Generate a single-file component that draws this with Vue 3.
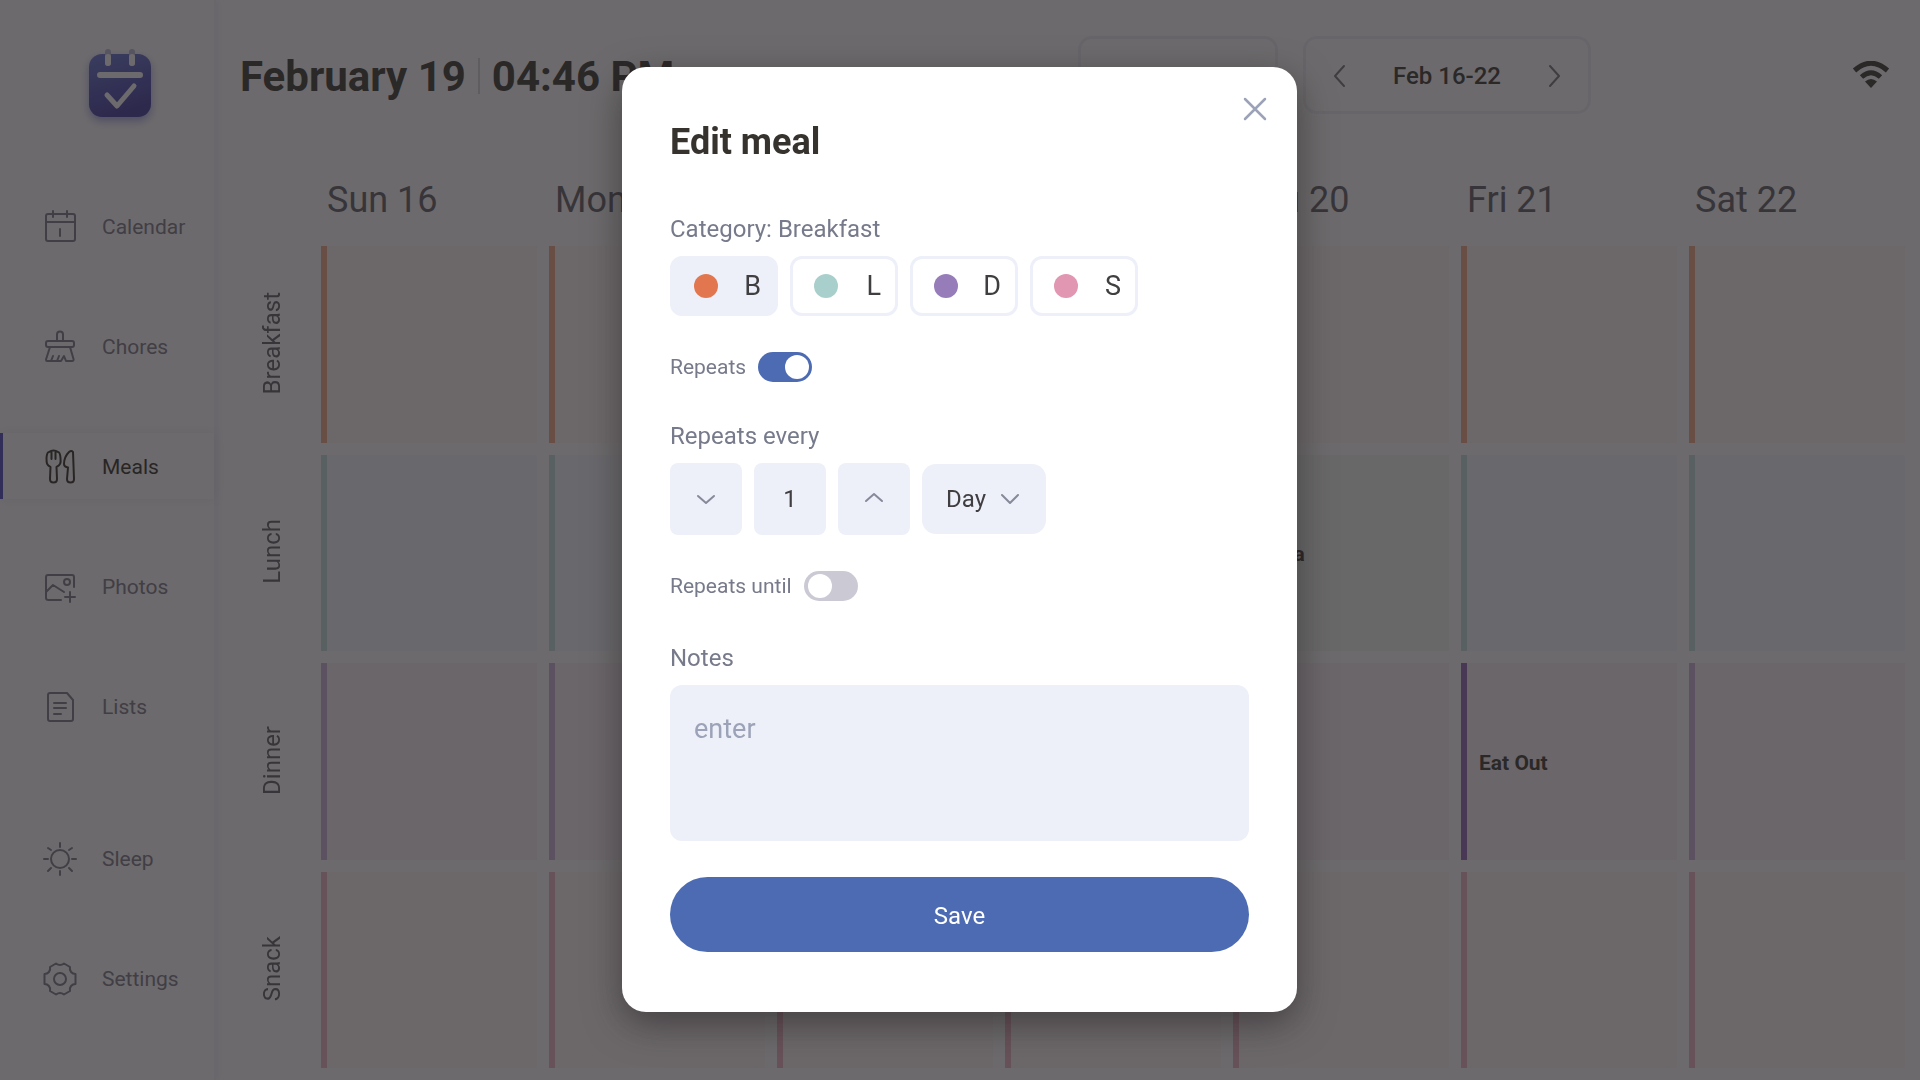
<script setup>
import { ref, computed } from 'vue';

// sidebar navigation
const navItems = [
  { key: 'calendar', label: 'Calendar' },
  { key: 'chores', label: 'Chores' },
  { key: 'meals', label: 'Meals' },
  { key: 'photos', label: 'Photos' },
  { key: 'lists', label: 'Lists' },
  { key: 'sleep', label: 'Sleep' },
  { key: 'settings', label: 'Settings' }
];
var activeNav = ref('meals');

const days = ['Sun 16', 'Mon 17', 'Tue 18', 'Wed 19', 'Thu 20', 'Fri 21', 'Sat 22'];

const categories = [
  { name: 'Breakfast', short: 'B' },
  { name: 'Lunch', short: 'L' },
  { name: 'Dinner', short: 'D' },
  { name: 'Snack', short: 'S' }
];

// planned meals, keyed by category and day
const meals = {
  'Lunch|Thu 20': 'Pasta',
  'Dinner|Fri 21': 'Eat Out'
};

function mealFor(category, day) {
  return meals[category + '|' + day];
}

// edit form
var showModal = ref(true);
var selected = ref('B');
var repeats = ref(true);
var every = ref(1);
var unit = ref('Day');
var hasEnd = ref(false);
var notes = ref('');

var selectedName = computed(() => categories.find(c => c.short === selected.value).name);

function stepDown() {
  if (every.value > 1) every.value--;
}

function save() {
  showModal.value = false;
}
</script>

<template>
  <div class="app">
    <!-- sidebar -->
    <aside class="sidebar">
      <svg class="logo" viewBox="0 0 80 80">
        <defs>
          <linearGradient id="logoFill" x1="0" y1="0" x2="0.3" y2="1">
            <stop offset="0" stop-color="#6474d6" />
            <stop offset="1" stop-color="#3c36a0" />
          </linearGradient>
        </defs>
        <rect class="logo-body" x="9" y="12" width="62" height="63" rx="13" fill="url(#logoFill)" />
        <path d="M28 10v11M52 10v11" stroke="#b9bbd8" stroke-width="6" stroke-linecap="round" />
        <path d="M28 15v6M52 15v6M20 33h40" stroke="#fff" stroke-width="6" stroke-linecap="round" />
        <path d="M27 53l10 11 17-20" fill="none" stroke="#fff" stroke-width="5" stroke-linecap="round" stroke-linejoin="round" />
      </svg>

      <nav class="nav">
        <a
          v-for="item in navItems"
          :key="item.key"
          href="#"
          class="nav-item"
          :class="['nav-' + item.key, { active: activeNav === item.key }]"
          @click.prevent="activeNav = item.key"
        >
          <svg class="nav-icon" viewBox="0 0 36 36">
            <g v-if="item.key === 'calendar'">
              <rect x="4" y="5" width="29" height="27" rx="2" />
              <path d="M4 13h29M11 2v6M25 2v6M18 20v7" />
            </g>
            <g v-else-if="item.key === 'chores'">
              <rect x="4" y="12" width="28" height="6" rx="2" />
              <path d="M15 12V5.500a3 3 0 0 1 6 0V12" />
              <path d="M8 18L4 30.500Q4 32 5 32H19L22 27l2 5h6Q32 32 31.500 30L28 18M9 32l2-5M15 32l2-5" />
            </g>
            <g v-else-if="item.key === 'meals'">
              <path d="M7 3q-2 0-2.500 6c0 5 0 7 4 9L8 30q0 3.500 3.500 3.500T15 30l-.5-12c4-2 4.500-4 4-9Q18 3 16 3q-2-1.500-4.500-1.500T7 3zM9.500 3.500V10M13.500 3.500V10" />
              <path d="M31 3q-1.500-2-4 0c-3 3-5 8-5 12 0 3 2 3 4 3.500L25 30q0 3.500 3.500 3.500T32 30z" />
            </g>
            <g v-else-if="item.key === 'photos'">
              <path d="M19 31H6.500Q4 31 4 29V8q0-2 2-2h24q2 0 2 2v10M4 23l7-7 11 7M28 23v10M23 28h10" />
              <circle cx="25" cy="13" r="3" />
            </g>
            <g v-else-if="item.key === 'lists'">
              <path d="M8 4h17l6 7v19q0 2-2 2H8q-2 0-2-2V6q0-2 2-2z" />
              <path d="M12 14h12M12 19h12M12 25h7" />
            </g>
            <g v-else-if="item.key === 'sleep'">
              <circle cx="18" cy="18" r="9" />
              <path d="M18 2v4M18 30v4M2 18h4M30 18h4M6 7l3 2M30 7l-3 2M6 30l3-3M30 30l-3-3" />
            </g>
            <g v-else>
              <circle cx="18" cy="18" r="6" />
              <path d="M14 2.500q4 3 8 0l6 3.500c-1 4 2 7 5.500 7v10c-3.500 0-6.500 3-5.500 7l-6 3.500q-4-3-8 0L8 30c1-4-2-7-5.500-7V13C6 13 9 10 8 6z" />
            </g>
          </svg>
          <span>{{ item.label }}</span>
        </a>
      </nav>
    </aside>

    <!-- weekly meal plan -->
    <main class="main">
      <header class="topbar">
        <h1 class="now">
          <span>February 19</span>
          <span class="now-divider"></span>
          <span>04:46 PM</span>
        </h1>
        <div class="controls">
          <button class="filter" type="button">
            <span>This week</span>
            <svg viewBox="0 0 24 24" width="24" height="24"><path d="M4 8l8 8 8-8" /></svg>
          </button>
          <div class="week">
            <button class="week-btn" type="button" aria-label="Previous week">
              <svg viewBox="0 0 24 24" width="24" height="24"><path d="M16 2L7 12l9 10" /></svg>
            </button>
            <span>Feb 16-22</span>
            <button class="week-btn" type="button" aria-label="Next week">
              <svg viewBox="0 0 24 24" width="24" height="24"><path d="M8 2l9 10-9 10" /></svg>
            </button>
          </div>
        </div>
        <svg class="wifi" viewBox="0 0 38 28">
          <path d="M2.500 9.500Q19-5 35.500 9.500M9.500 16Q19 7.500 28.500 16" fill="none" stroke-width="5" />
          <path d="M13 20.500q6-5 12 0L19 27z" stroke="none" />
        </svg>
      </header>

      <div class="days">
        <div v-for="day in days" :key="day" class="day">{{ day }}</div>
      </div>

      <div class="plan">
        <template v-for="cat in categories" :key="cat.name">
          <div class="row-label"><span>{{ cat.name }}</span></div>
          <div
            v-for="day in days"
            :key="day"
            class="cell"
            :class="['cell-' + cat.short, { filled: mealFor(cat.name, day) }]"
          >
            {{ mealFor(cat.name, day) }}
          </div>
        </template>
      </div>
    </main>

    <!-- edit dialog -->
    <div v-if="showModal" class="overlay">
      <form class="modal" role="dialog" aria-labelledby="modal-title" @submit.prevent="save">
        <button class="close" type="button" aria-label="Close" @click="showModal = false">
          <svg viewBox="0 0 24 24" width="24" height="24"><path d="M2 2l20 20M22 2L2 22" /></svg>
        </button>
        <h2 id="modal-title">Edit meal</h2>

        <div class="field-label">Category: {{ selectedName }}</div>
        <div class="chips">
          <button
            v-for="cat in categories"
            :key="cat.short"
            type="button"
            class="chip"
            :class="{ selected: selected === cat.short }"
            @click="selected = cat.short"
          >
            <span class="dot" :class="'dot-' + cat.short"></span>
            <span>{{ cat.short }}</span>
          </button>
        </div>

        <label class="switch">
          <span>Repeats</span>
          <input v-model="repeats" type="checkbox" />
        </label>

        <label class="field-label" for="every">Repeats every</label>
        <div class="stepper">
          <button class="step" type="button" aria-label="Less" @click="stepDown">
            <svg viewBox="0 0 24 24" width="24" height="24"><path d="M4 9l8 7 8-7" /></svg>
          </button>
          <input id="every" v-model="every" class="step" type="text" />
          <button class="step" type="button" aria-label="More" @click="every++">
            <svg viewBox="0 0 24 24" width="24" height="24"><path d="M4 14l8-7 8 7" /></svg>
          </button>
          <div class="unit">
            <select v-model="unit" aria-label="Unit">
              <option>Day</option>
              <option>Week</option>
              <option>Month</option>
            </select>
            <svg viewBox="0 0 24 24" width="24" height="24"><path d="M4 8l8 8 8-8" /></svg>
          </div>
        </div>

        <label class="switch">
          <span>Repeats until</span>
          <input v-model="hasEnd" type="checkbox" />
        </label>

        <label class="field-label notes-label" for="notes">Notes</label>
        <textarea id="notes" v-model="notes" placeholder="enter"></textarea>

        <button class="save" type="submit">Save</button>
      </form>
    </div>
  </div>
</template>

<style>
body {
  background: #fff;
}
</style>

<style scoped>
* {
  box-sizing: border-box;
}

.app {
  display: flex;
  min-height: 100vh;
  font-family: Roboto, "Liberation Sans", sans-serif;
  color: #36322d;
}

button,
input,
select,
textarea {
  font: inherit;
  color: inherit;
  border: none;
  background: none;
  padding: 0;
  margin: 0;
}

button {
  cursor: pointer;
}

svg {
  display: block;
  flex: none;
}

/* sidebar */
.sidebar {
  width: 216px;
  flex: none;
  border-right: 2px solid #f6f5fb;
  box-shadow: 3px 0 6px rgba(90, 90, 220, 0.08);
}

.logo {
  width: 80px;
  height: 80px;
  margin: 42px auto 0 80px;
  overflow: visible;
}

.logo-body {
  filter: drop-shadow(0 4px 4px rgba(69, 72, 200, 0.5));
}

.nav {
  display: flex;
  flex-direction: column;
  gap: 54px;
  margin-top: 71px;
}

.nav-item {
  display: flex;
  align-items: center;
  gap: 24px;
  height: 66px;
  padding: 2px 0 0 39px;
  border-left: 3px solid transparent;
  font-size: 21px;
  color: #7a7687;
  text-decoration: none;
}

.nav-item.active {
  color: #2f2b22;
  border-left-color: #4a4ac4;
  box-shadow: 0 0 12px rgba(80, 80, 160, 0.12);
}

.nav-sleep {
  margin-top: 32px;
}

.nav-icon {
  width: 36px;
  height: 36px;
  fill: none;
  stroke: currentColor;
  stroke-width: 2;
  stroke-linecap: round;
  stroke-linejoin: round;
}

/* top bar */
.main {
  flex: 1;
  min-width: 0;
  display: flex;
  flex-direction: column;
  padding: 36px 15px 12px 24px;
}

.topbar {
  display: flex;
  align-items: center;
  height: 78px;
  padding-right: 15px;
}

.now {
  display: flex;
  align-items: center;
  gap: 12px;
  width: 838px;
  margin: 0;
  padding-top: 2px;
  font-size: 42px;
  font-weight: 700;
  white-space: nowrap;
}

.now-divider {
  width: 2px;
  height: 36px;
  background: #d8d6da;
}

.controls {
  display: flex;
  gap: 25px;
}

.filter,
.week {
  display: flex;
  align-items: center;
  justify-content: space-between;
  height: 78px;
  border: 3px solid #f0f0f8;
  border-radius: 14px;
  font-size: 24px;
  font-weight: 500;
}

.filter {
  width: 200px;
  padding: 3px 22px 0 12px;
}

.week {
  width: 288px;
  padding: 2px 22px 0;
}

.filter svg,
.week-btn svg {
  fill: none;
  stroke: #77737c;
  stroke-width: 2;
  stroke-linecap: round;
  stroke-linejoin: round;
}

.wifi {
  width: 38px;
  height: 28px;
  margin-left: auto;
  fill: #36322d;
  stroke: #36322d;
}

/* week grid */
.days {
  display: grid;
  grid-template-columns: repeat(7, 1fr);
  gap: 12px;
  margin-left: 81px;
  padding-top: 62px;
  height: 132px;
  font-size: 36px;
  line-height: 48px;
  color: #5c5a60;
}

.day {
  padding-left: 6px;
}

.plan {
  flex: 1;
  display: grid;
  grid-template-columns: 69px repeat(7, 1fr);
  grid-template-rows: repeat(4, 1fr);
  gap: 12px;
}

.row-label {
  display: flex;
  align-items: center;
  justify-content: center;
  padding: 0 6px 2px 0;
  font-size: 24px;
  color: #5c5a60;
}

.row-label span {
  writing-mode: vertical-rl;
  rotate: 180deg;
}

.cell {
  display: flex;
  align-items: center;
  padding: 3px 0 0 12px;
  border-left: 6px solid;
  font-size: 21px;
  font-weight: 700;
}

.cell-B {
  background: #fff8f6;
  border-color: #f4a88a;
}

.cell-L {
  background: #f5f9fe;
  border-color: #c4e0e0;
}

.cell-D {
  background: #fbf2f9;
  border-color: #c9b0de;
}

.cell-S {
  background: #fff7f8;
  border-color: #f0b4c6;
}

.cell-L.filled {
  background: #f4f9f5;
  border-color: #a8cfcd;
}

.cell-D.filled {
  background: #fbf2f6;
  border-color: #9060b8;
}

/* dialog */
.overlay {
  position: fixed;
  inset: 0;
  display: flex;
  align-items: center;
  justify-content: center;
  padding: 0 1px 1px 0;
  background: rgba(39, 36, 38, 0.68);
}

.modal {
  position: relative;
  width: 675px;
  padding: 48px 48px 60px;
  background: #fff;
  border-radius: 24px;
  box-shadow: 0 12px 36px rgba(30, 25, 25, 0.5);
}

.close {
  position: absolute;
  top: 30px;
  right: 30px;
}

.close svg {
  fill: none;
  stroke: #9ca3b8;
  stroke-width: 2.5;
  stroke-linecap: round;
}

h2 {
  margin: 0 0 46px;
  font-size: 36px;
  font-weight: 700;
  line-height: 54px;
}

.field-label {
  display: block;
  font-size: 24px;
  line-height: 28px;
  color: #767a8a;
}

.notes-label {
  margin-top: 43px;
}

.chips {
  display: flex;
  gap: 12px;
  margin: 13px 0 36px;
}

.chip {
  display: flex;
  align-items: center;
  justify-content: space-between;
  width: 108px;
  height: 60px;
  padding: 0 14px 0 21px;
  border: 3px solid #edf0f8;
  border-radius: 12px;
  font-size: 27px;
  color: #403e40;
}

.chip.selected {
  background: #edf0f8;
}

.dot {
  width: 24px;
  height: 24px;
  border-radius: 50%;
}

.dot-B {
  background: #e2774f;
}

.dot-L {
  background: #a9cfcd;
}

.dot-D {
  background: #967db9;
}

.dot-S {
  background: #e196b1;
}

.switch {
  display: flex;
  align-items: center;
  gap: 12px;
  height: 30px;
  margin-bottom: 40px;
  font-size: 21px;
  color: #767a8a;
}

.switch input {
  appearance: none;
  display: flex;
  width: 54px;
  height: 30px;
  padding: 3px 3px 3px 4px;
  border-radius: 15px;
  background: #cbc9d4;
  cursor: pointer;
}

.switch input::before {
  content: "";
  width: 24px;
  height: 24px;
  border-radius: 50%;
  background: #fff;
}

.switch input:checked {
  justify-content: flex-end;
  background: #4c6bb2;
}

.stepper {
  display: flex;
  align-items: center;
  gap: 12px;
  margin: 13px 0 36px;
  font-size: 24px;
  color: #403e40;
}

.step {
  display: flex;
  align-items: center;
  justify-content: center;
  width: 72px;
  height: 72px;
  border-radius: 8px;
  background: #edf0f8;
  text-align: center;
}

.stepper svg {
  fill: none;
  stroke: #85899a;
  stroke-width: 2;
  stroke-linecap: round;
  stroke-linejoin: round;
}

.unit {
  position: relative;
}

.unit select {
  appearance: none;
  display: block;
  width: 124px;
  height: 70px;
  padding-left: 24px;
  border-radius: 14px;
  background: #edf0f8;
}

.unit svg {
  position: absolute;
  right: 24px;
  top: 23px;
  pointer-events: none;
}

textarea {
  display: block;
  width: 100%;
  height: 156px;
  margin: 13px 0 36px;
  padding: 28px 24px;
  border-radius: 12px;
  background: #edf0f8;
  font-size: 27px;
  resize: none;
}

textarea::placeholder {
  color: #9ca3b8;
  opacity: 1;
}

.save {
  display: block;
  width: 100%;
  height: 75px;
  padding-top: 3px;
  border-radius: 38px;
  background: #4c6bb2;
  font-size: 24px;
  color: #fff;
}
</style>
